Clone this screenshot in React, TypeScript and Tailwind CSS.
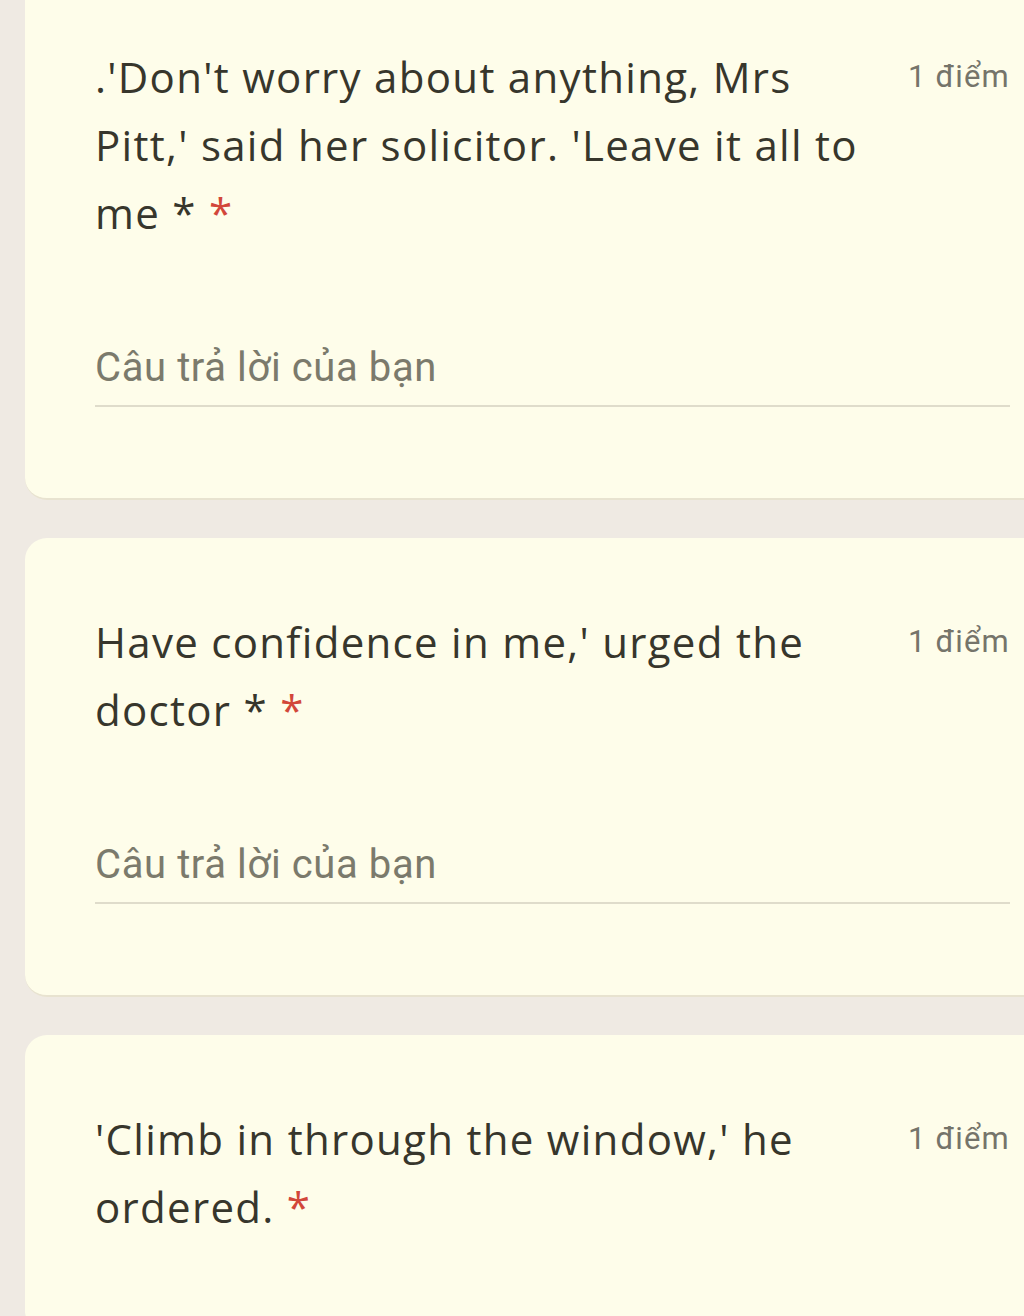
export default function App() {
  const questions = [
    {
      title: ".'Don't worry about anything, Mrs Pitt,' said her solicitor. 'Leave it all to me * ",
      answer: true,
    },
    { title: "Have confidence in me,' urged the doctor * ", answer: true },
    { title: "'Climb in through the window,' he ordered. ", answer: false },
  ]

  return (
    <div className="h-[1316px] overflow-hidden bg-[#efeae3] pl-[25px]">
      <div className="-mt-[27px] flex flex-col gap-[38px]">
        {questions.map((q, i) => (
          <div
            key={i}
            className="rounded-l-[22px] border-b-2 border-[#e8e3d0] bg-[#fefdea] pb-[91px] pl-[70px] pr-[14px] pt-[70px]"
          >
            <div className="flex items-start justify-between">
              <div className="w-[780px] font-['Open_Sans',sans-serif] text-[42px] leading-[68px] tracking-[1.3px] text-[#37362c]">
                {q.title}
                <span className="text-[#d2473a]">*</span>
              </div>
              <div className="pt-[14px] font-['Roboto',sans-serif] text-[31px] leading-[40px] tracking-[1.2px] text-[#75746a]">
                1 điểm
              </div>
            </div>
            {q.answer && (
              <div className="mt-[97px] border-b-2 border-[#dfdccb] pb-[13px] font-['Roboto',sans-serif] text-[40px] leading-[48px] tracking-[0.6px] text-[#7b7a6c]">
                Câu trả lời của bạn
              </div>
            )}
          </div>
        ))}
      </div>
    </div>
  )
}
